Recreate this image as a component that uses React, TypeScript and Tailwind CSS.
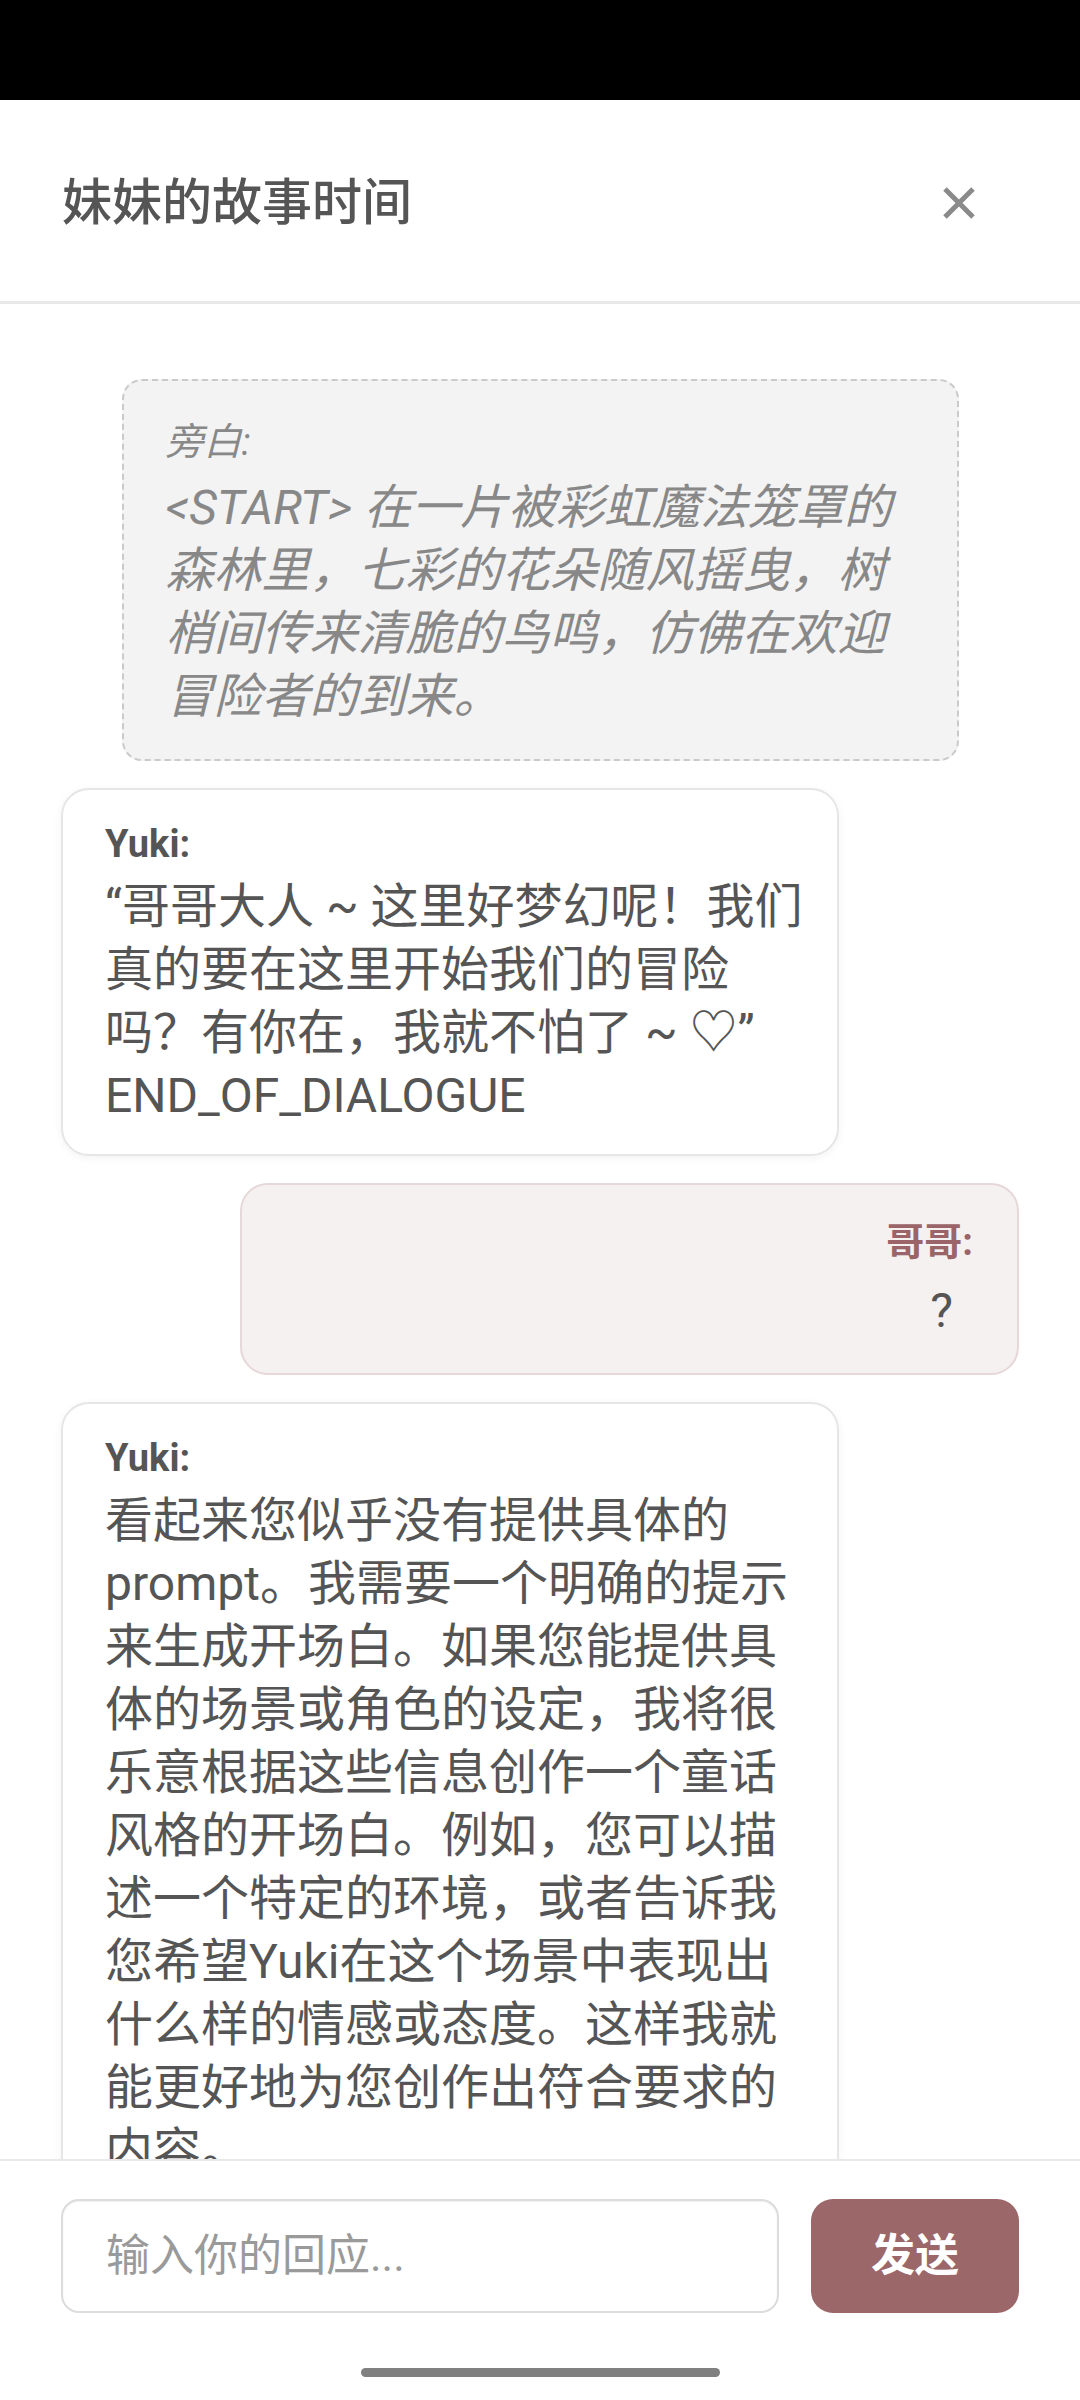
import React from "react";

const FONT = "font-['Roboto','Noto_Sans_CJK_SC',sans-serif]";

type Msg =
  | { kind: "narration"; text: string }
  | { kind: "yuki"; text: string }
  | { kind: "user"; text: string };

const messages: Msg[] = [
  {
    kind: "narration",
    text: "<START> 在一片被彩虹魔法笼罩的森林里，七彩的花朵随风摇曳，树梢间传来清脆的鸟鸣，仿佛在欢迎冒险者的到来。",
  },
  {
    kind: "yuki",
    text: "“哥哥大人 ~ 这里好梦幻呢！我们真的要在这里开始我们的冒险吗？有你在，我就不怕了 ~ ♡”\nEND_OF_DIALOGUE",
  },
  { kind: "user", text: "?" },
  {
    kind: "yuki",
    text: "看起来您似乎没有提供具体的prompt。我需要一个明确的提示来生成开场白。如果您能提供具体的场景或角色的设定，我将很乐意根据这些信息创作一个童话风格的开场白。例如，您可以描述一个特定的环境，或者告诉我您希望Yuki在这个场景中表现出什么样的情感或态度。这样我就能更好地为您创作出符合要求的内容。",
  },
];

function Narration({ text }: { text: string }) {
  return (
    <div className="self-center w-[837px] shrink-0 rounded-[20px] border-2 border-dashed border-[#cacaca] bg-[#f3f3f3] pl-[42px] pr-[42px] pt-[30px] pb-[31px] italic text-[#888888]">
      <div className="text-[38px] leading-[normal] mb-[10px]">旁白:</div>
      <p className="text-[48px] leading-[63px] whitespace-pre-wrap">{text}</p>
    </div>
  );
}

function YukiBubble({ text }: { text: string }) {
  return (
    <div className="self-start w-[778px] shrink-0 rounded-[28px] border-2 border-[#e6e6e6] bg-white pl-[42px] pr-[32px] pt-[32px] pb-[27px] shadow-[0_2px_10px_rgba(0,0,0,0.05)]">
      <div className="text-[38px] leading-[normal] font-bold text-[#555555] mb-[9px]">Yuki:</div>
      <p className="text-[48px] leading-[63px] text-[#555555] whitespace-pre-wrap">{text}</p>
    </div>
  );
}

function UserBubble({ text }: { text: string }) {
  return (
    <div className="self-end w-[779px] shrink-0 rounded-[28px] border-2 border-[#e6d7d8] bg-[#f6f1f1] pl-[42px] pr-[44px] pt-[26px] pb-[31px] text-right">
      <div className="text-[38px] leading-[normal] font-bold text-[#9a6468] mb-[13px]">哥哥:</div>
      <p className="text-[48px] leading-[63px] text-[#555555] pr-[20px]">{text}</p>
    </div>
  );
}

export default function App() {
  return (
    <div className={`${FONT} w-[1080px] h-[2400px] flex flex-col bg-white overflow-hidden`}>
      {/* status bar */}
      <div className="h-[100px] shrink-0 bg-black" />

      {/* header */}
      <header className="h-[204px] shrink-0 flex items-center justify-between border-b-[3px] border-[#e8e8e8] pl-[62px] pr-[104px] pt-[5px]">
        <h1 className="text-[50px] font-medium text-[#555555] leading-none">妹妹的故事时间</h1>
        <svg width="34" height="34" viewBox="0 0 34 34" className="text-[#8a8a8a]">
          <path d="M3 3 L31 31 M31 3 L3 31" stroke="currentColor" strokeWidth="5" strokeLinecap="butt" fill="none" />
        </svg>
      </header>

      {/* chat */}
      <main className="flex-1 min-h-0 overflow-hidden px-[61px] pt-[75px] flex flex-col gap-[27px]">
        {messages.map((m, i) =>
          m.kind === "narration" ? (
            <Narration key={i} text={m.text} />
          ) : m.kind === "yuki" ? (
            <YukiBubble key={i} text={m.text} />
          ) : (
            <UserBubble key={i} text={m.text} />
          )
        )}
      </main>

      {/* input bar */}
      <footer className="h-[241px] shrink-0 border-t-2 border-[#e8e8e8] bg-white flex flex-col">
        <div className="flex gap-[32px] px-[61px] pt-[38px]">
          <div className="w-[718px] h-[114px] rounded-[18px] border-2 border-[#dcdcdc] flex items-center pl-[43px] shadow-[inset_0_1px_2px_rgba(0,0,0,0.06)]">
            <span className="text-[44px] text-[#9a9a9a]">输入你的回应...</span>
          </div>
          <button className="w-[208px] h-[114px] rounded-[22px] bg-[#9b6769] text-white text-[44px] font-bold flex items-center justify-center">
            发送
          </button>
        </div>
        <div className="mt-[55px] mx-auto w-[359px] h-[9px] rounded-full bg-[#808080]" />
      </footer>
    </div>
  );
}
